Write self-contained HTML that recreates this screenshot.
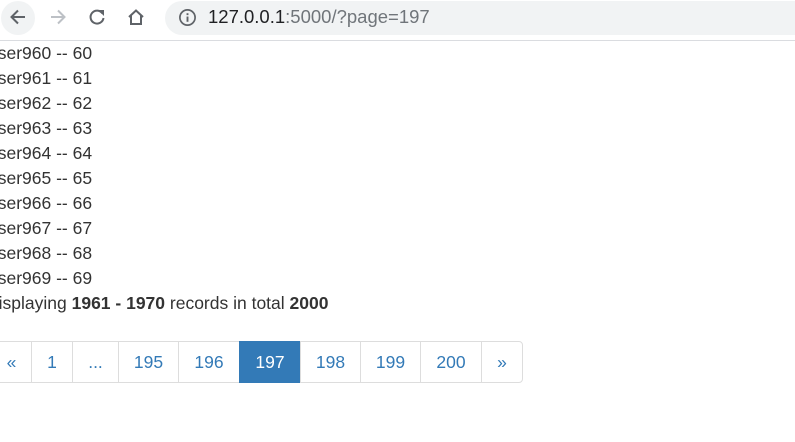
<!DOCTYPE html>
<html><head><meta charset="utf-8"><style>
*{box-sizing:border-box;margin:0;padding:0}
body{width:795px;height:442px;overflow:hidden;background:#fff;font-family:"Liberation Sans",Arial,sans-serif;color:#333;position:relative}
.bar{position:absolute;left:0;top:0;width:795px;height:41px;border-bottom:1px solid #dadce0;background:#fff}
.back{position:absolute;left:1px;top:1px;width:34px;height:34px;border-radius:50%;background:#f1f3f4}
.pill{position:absolute;left:165px;top:1px;width:660px;height:34px;border-radius:17px;background:#f1f3f4}
.url{position:absolute;left:208px;top:6px;font-size:18.5px;color:#202124;letter-spacing:0}
.url span{color:#70757a}
svg{position:absolute}
.content{position:absolute;left:-12px;top:41px;font-size:17.5px;line-height:25px}
.pg{position:absolute;top:341px;height:42px;left:0;width:795px}
.pg a{position:absolute;top:0;height:42px;border:1px solid #ddd;color:#337ab7;font-size:17.5px;line-height:40px;text-align:center;text-decoration:none}
.pg a.act{background:#337ab7;border-color:#337ab7;color:#fff}
</style></head><body>
<div class="bar">
<div class="back"></div>
<svg style="left:8px;top:7px" width="20" height="20" viewBox="0 0 20 20"><path d="M17 10H4M10 3.5L3.5 10L10 16.5" fill="none" stroke="#5f6368" stroke-width="2"/></svg>
<svg style="left:48px;top:7px" width="20" height="20" viewBox="0 0 20 20"><path d="M3 10H16M10 3.5L16.5 10L10 16.5" fill="none" stroke="#bdc1c6" stroke-width="2"/></svg>
<svg style="left:87px;top:7px" width="20" height="20" viewBox="0 0 20 20"><path d="M15.5 6.5A6.5 6.5 0 1 0 16.5 11" fill="none" stroke="#5f6368" stroke-width="2"/><path d="M11 3H17V9Z" fill="#5f6368"/></svg>
<svg style="left:126px;top:7px" width="20" height="20" viewBox="0 0 20 20"><path d="M3 10L10 3.5L17 10M5 8.5V17H15V8.5" fill="none" stroke="#5f6368" stroke-width="2"/></svg>
<div class="pill"></div>
<svg style="left:178px;top:8px" width="19" height="19" viewBox="0 0 20 20"><circle cx="10" cy="10" r="8" fill="none" stroke="#5f6368" stroke-width="1.8"/><rect x="9" y="9" width="2" height="5.5" fill="#5f6368"/><rect x="9" y="5.5" width="2" height="2" fill="#5f6368"/></svg>
<div class="url">127.0.0.1<span>:5000/?page=197</span></div>
</div>
<div class="content">
<div>user960 -- 60</div>
<div>user961 -- 61</div>
<div>user962 -- 62</div>
<div>user963 -- 63</div>
<div>user964 -- 64</div>
<div>user965 -- 65</div>
<div>user966 -- 66</div>
<div>user967 -- 67</div>
<div>user968 -- 68</div>
<div>user969 -- 69</div>
<div style="margin-left:-2px">Displaying <b>1961 - 1970</b> records in total <b>2000</b></div>
</div>
<div class="pg">
<a style="left:-9px;width:41px;border-radius:4px 0 0 4px">&laquo;</a>
<a style="left:31px;width:42px">1</a>
<a style="left:72px;width:47px">...</a>
<a style="left:118px;width:61px">195</a>
<a style="left:178px;width:62px">196</a>
<a class="act" style="left:239px;width:62px">197</a>
<a style="left:300px;width:61px">198</a>
<a style="left:360px;width:61px">199</a>
<a style="left:420px;width:62px">200</a>
<a style="left:481px;width:42px;border-radius:0 4px 4px 0">&raquo;</a>
</div>
</body></html>
